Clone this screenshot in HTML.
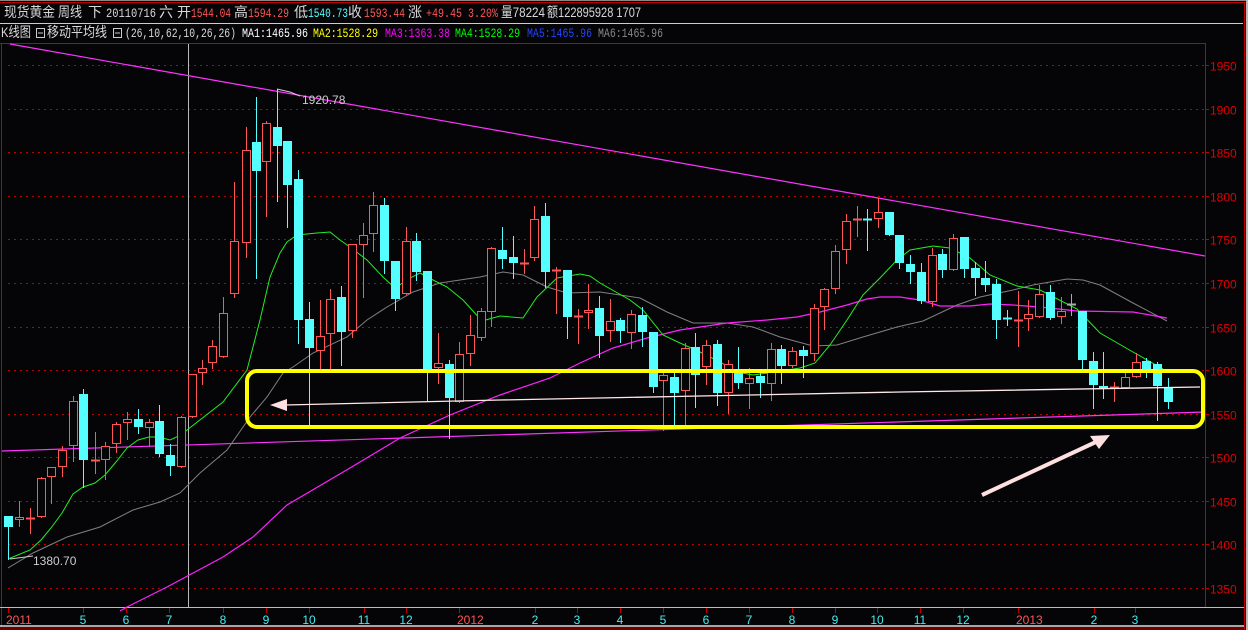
<!DOCTYPE html>
<html><head><meta charset="utf-8">
<style>
html,body{margin:0;padding:0;background:#050508;width:1248px;height:630px;overflow:hidden}
svg{display:block}
.t{font-family:"Liberation Sans","Noto Sans CJK SC",sans-serif;font-size:14px}
.m{font-family:"Liberation Mono","Noto Sans CJK SC",monospace;font-size:13px}
.ax{font-family:"Liberation Sans",sans-serif;font-size:12px}
</style></head>
<body>
<svg id="s" width="1248" height="630" xmlns="http://www.w3.org/2000/svg">
<rect width="1248" height="630" fill="#050508"/>
<line x1="0" y1="0.5" x2="1248" y2="0.5" stroke="#888"/>
<line x1="0" y1="2.5" x2="1246" y2="2.5" stroke="#c00000"/>
<line x1="1244.5" y1="2" x2="1244.5" y2="630" stroke="#c00000"/>
<rect x="1246" y="0" width="2" height="630" fill="#bbb"/>
<line x1="0" y1="23.5" x2="1243" y2="23.5" stroke="#ccc"/>
<line x1="0" y1="43.5" x2="1206" y2="43.5" stroke="#c00000"/>
<line x1="1.5" y1="43" x2="1.5" y2="630" stroke="#c00000"/>
<line x1="1205.5" y1="43" x2="1205.5" y2="607" stroke="#c00000"/>
<line x1="0" y1="607.5" x2="1244" y2="607.5" stroke="#bbb"/>
<line x1="0" y1="626" x2="1244" y2="626" stroke="#ddd" stroke-width="1.5"/>
<rect x="0" y="627" width="1244" height="3" fill="#700000"/>

<g class="t" fill="#d8d8d8">
<text x="4" y="17" textLength="51" lengthAdjust="spacingAndGlyphs">现货黄金</text>
<text x="58" y="17" textLength="24" lengthAdjust="spacingAndGlyphs">周线</text>
<text x="88" y="17">下</text>
<text x="106" y="17" class="m" textLength="50" lengthAdjust="spacingAndGlyphs">20110716</text>
<text x="159" y="17">六</text>
<text x="177" y="17">开</text>
<text x="191" y="17" class="m" fill="#ff5555" textLength="40" lengthAdjust="spacingAndGlyphs">1544.04</text>
<text x="234" y="17">高</text>
<text x="248" y="17" class="m" fill="#ff5555" textLength="41" lengthAdjust="spacingAndGlyphs">1594.29</text>
<text x="294" y="17">低</text>
<text x="308" y="17" class="m" fill="#55ffff" textLength="40" lengthAdjust="spacingAndGlyphs">1540.73</text>
<text x="348" y="17">收</text>
<text x="364" y="17" class="m" fill="#ff5555" textLength="41" lengthAdjust="spacingAndGlyphs">1593.44</text>
<text x="408" y="17">涨</text>
<text x="426" y="17" class="m" fill="#ff5555" textLength="72" lengthAdjust="spacingAndGlyphs">+49.45 3.20%</text>
<text x="501" y="17" textLength="44" lengthAdjust="spacingAndGlyphs">量78224</text>
<text x="547" y="17" textLength="94" lengthAdjust="spacingAndGlyphs">额122895928 1707</text>
</g>
<g class="t" fill="#d8d8d8">
<text x="1" y="37" textLength="30" lengthAdjust="spacingAndGlyphs">K线图</text>
<rect x="36.5" y="28.5" width="8" height="9" fill="none" stroke="#ccc"/><line x1="38" y1="33" x2="43" y2="33" stroke="#ccc"/>
<text x="47" y="37" textLength="60" lengthAdjust="spacingAndGlyphs">移动平均线</text>
<rect x="113.5" y="28.5" width="8" height="9" fill="none" stroke="#ccc"/><line x1="115" y1="33" x2="120" y2="33" stroke="#ccc"/>
<text x="125" y="37" class="m" textLength="111" lengthAdjust="spacingAndGlyphs">(26,10,62,10,26,26)</text>
<text x="242" y="37" class="m" fill="#ffffff" textLength="66" lengthAdjust="spacingAndGlyphs">MA1:1465.96</text>
<text x="313" y="37" class="m" fill="#ffff00" textLength="65" lengthAdjust="spacingAndGlyphs">MA2:1528.29</text>
<text x="385" y="37" class="m" fill="#ff00ff" textLength="65" lengthAdjust="spacingAndGlyphs">MA3:1363.38</text>
<text x="455" y="37" class="m" fill="#00ff00" textLength="65" lengthAdjust="spacingAndGlyphs">MA4:1528.29</text>
<text x="527" y="37" class="m" fill="#2244ff" textLength="65" lengthAdjust="spacingAndGlyphs">MA5:1465.96</text>
<text x="598" y="37" class="m" fill="#888888" textLength="65" lengthAdjust="spacingAndGlyphs">MA6:1465.96</text>
</g>

<g id="grid"></g>
<line x1="188.5" y1="44" x2="188.5" y2="607" stroke="#bbb"/>

<line x1="10" y1="44" x2="1205" y2="256" stroke="#ff33ff" stroke-width="1.2"/>
<line x1="2" y1="451" x2="1205" y2="412" stroke="#ff33ff" stroke-width="1.2"/>

<polyline fill="none" stroke="#808080" stroke-width="1" points="8,568 33,553 67,537 100,527 133,510 160,502 180,493 200,473 227,450 250,417 267,397 283,373 293,367 313,353 347,337 367,320 387,307 413,292 440,283 480,277 503,272 523,275 547,287 567,293 600,292 640,298 667,312 693,323 727,323 753,327 780,337 813,346 837,345 863,337 897,327 923,321 957,305 980,297 1013,290 1033,285 1067,279 1083,280 1100,285 1133,303 1167,321"/>
<polyline fill="none" stroke="#ff22ff" stroke-width="1.2" points="120,611 127,607 167,587 223,557 253,537 287,505 350,468 400,438 450,415 500,395 550,378 580,363 613,348 647,338 680,330 727,323 767,320 797,317 820,312 847,305 867,299 880,297 900,297 920,300 940,306 970,306 990,304 1013,305 1040,307 1077,311 1133,312 1167,318"/>
<polyline fill="none" stroke="#22ee22" stroke-width="1" points="8,559 30,550 41,540 51,528 62,513 73,494 83,487 95,483 105,475 116,462 127,448 138,440 149,437 159,437 170,440 181,435 187,430 223,402 247,370 260,320 270,277 280,253 287,242 297,235 317,233 330,232 340,240 350,247 367,260 383,277 395,288 410,278 420,273 433,280 447,287 463,300 482,321 500,316 523,318 537,297 557,278 580,274 590,276 600,283 630,300 643,310 663,335 680,343 700,352 720,362 737,372 753,375 768,373 800,368 815,363 830,345 847,320 863,295 880,278 897,260 910,250 933,246 950,248 970,258 990,275 1017,286 1040,290 1077,309 1100,333 1133,352 1163,369"/>

<g id="candles"></g>

<polyline fill="none" stroke="#ffe8e8" stroke-width="1.3" points="285,405 500,400 700,396 900,392 1200,387"/>
<polygon points="270,405 287,399 287,411" fill="#ffe0e0"/>
<rect x="247" y="371" width="956" height="56" rx="10" ry="10" fill="none" stroke="#ffff00" stroke-width="4"/>
<line x1="982" y1="495" x2="1098" y2="441" stroke="#ffe0e0" stroke-width="4"/>
<polygon points="1110,435 1090,436 1099,449" fill="#ffe0e0"/>

<polyline points="277,89 290,92 300,96" fill="none" stroke="#ccc"/>
<text x="302" y="104" class="ax" fill="#ccc">1920.78</text>
<polyline points="10,559 33,556" fill="none" stroke="#ccc"/>
<text x="33" y="565" class="ax" fill="#ccc">1380.70</text>

<g id="yax" class="ax" fill="#e00000"></g>
<g id="xax" class="ax"></g>
</svg>
<script>
var NS="http://www.w3.org/2000/svg";
function el(t,a,p){var e=document.createElementNS(NS,t);for(var k in a)e.setAttribute(k,a[k]);(p||document.getElementById('s')).appendChild(e);return e;}
var grid=document.getElementById('grid'),yax=document.getElementById('yax');
for(var p=1950;p>=1350;p-=50){var y=Math.round(65+(1950-p)*0.8717)+0.5;
el('line',{x1:8,y1:y,x2:1205,y2:y,stroke:'#c00000','stroke-dasharray':'2,4'},grid);
el('line',{x1:1205,y1:y,x2:1209,y2:y,stroke:'#c00000'},grid);
var t=el('text',{x:1210,y:y+5},yax);t.textContent=p;}
var xl=[[8,'2011',1],[83,'5'],[126,'6'],[169,'7'],[223,'8'],[266,'9'],[309,'10'],[364,'11'],[406,'12'],[459,'2012',1],[535,'2'],[577,'3'],[620,'4'],[663,'5'],[706,'6'],[749,'7'],[792,'8'],[835,'9'],[877,'10'],[920,'11'],[963,'12'],[1018,'2013',1],[1094,'2'],[1135,'3']];
var xax=document.getElementById('xax');
xl.forEach(function(a){el('line',{x1:a[0]+0.5,y1:608,x2:a[0]+0.5,y2:613,stroke:'#c00000'},xax);
var t=el('text',{x:a[1].length>=4?a[0]-2:a[0],y:624,fill:a[2]?'#ff5555':'#44eeee','text-anchor':a[1].length>=4?'start':'middle'},xax);t.textContent=a[1];});
var C=[[8,516,527,516,559,'c'],[19,517,520,501,526,'r'],[30,518,518,508,533,'r'],[41,478,517,477,517,'r'],[51,467,477,467,503,'r'],[62,450,467,446,476,'r'],[73,401,446,396,461,'r'],[83,394,460,389,487,'c'],[95,460,460,432,473,'r'],[105,446,460,442,479,'r'],[116,424,444,422,452,'r'],[127,419,423,412,439,'r'],[138,419,427,409,433,'c'],[149,422,428,419,446,'r'],[159,421,454,405,456,'c'],[170,455,466,444,475,'c'],[181,417,467,416,467,'r'],[192,374,417,374,417,'r'],[202,368,373,360,384,'r'],[212,346,363,340,368,'r'],[223,313,357,297,357,'r'],[234,241,294,182,297,'r'],[246,150,243,127,257,'r'],[256,142,171,97,278,'c'],[266,123,162,121,216,'r'],[277,127,146,89,201,'c'],[287,141,185,141,227,'c'],[298,179,320,170,343,'c'],[309,319,348,302,425,'c'],[320,336,351,300,370,'r'],[330,299,334,289,370,'r'],[341,297,332,286,365,'c'],[352,244,331,244,337,'r'],[363,235,245,223,297,'r'],[373,205,234,192,251,'r'],[384,205,261,198,273,'c'],[395,261,299,261,310,'c'],[406,241,294,227,294,'r'],[416,241,272,233,280,'c'],[427,271,370,271,400,'c'],[438,363,368,333,383,'r'],[449,364,398,360,438,'c'],[459,354,402,342,402,'r'],[470,335,354,315,365,'r'],[481,311,338,308,340,'r'],[491,248,312,247,326,'r'],[502,250,259,227,268,'c'],[513,257,263,236,278,'c'],[524,263,263,249,273,'r'],[534,219,258,206,260,'r'],[545,216,272,203,287,'c'],[556,270,270,267,313,'r'],[567,270,317,270,338,'c'],[578,316,316,309,343,'r'],[588,310,313,284,328,'r'],[599,308,336,296,357,'c'],[610,321,331,299,341,'r'],[620,320,331,318,342,'c'],[631,314,333,310,348,'r'],[642,315,332,307,346,'c'],[653,332,387,332,392,'c'],[663,375,381,369,430,'r'],[674,377,393,373,425,'c'],[685,348,391,343,428,'r'],[695,347,375,333,407,'c'],[706,345,367,340,384,'r'],[717,344,393,340,405,'c'],[728,364,393,360,413,'r'],[738,373,383,347,388,'c'],[749,378,384,368,408,'r'],[760,376,383,373,397,'c'],[771,349,384,343,400,'r'],[781,349,366,345,383,'c'],[792,351,366,347,367,'r'],[803,350,356,346,377,'c'],[814,308,354,304,360,'r'],[824,289,307,288,329,'r'],[835,251,289,245,293,'r'],[846,221,250,214,263,'r'],[857,219,219,206,236,'r'],[867,219,219,209,250,'c'],[878,212,219,198,227,'r'],[889,212,235,212,235,'c'],[899,235,263,235,268,'c'],[910,264,272,255,283,'c'],[921,272,301,263,303,'c'],[932,255,302,248,306,'r'],[942,254,270,249,277,'c'],[953,238,270,234,270,'r'],[964,237,269,237,277,'c'],[975,268,278,262,295,'c'],[985,278,285,261,291,'c'],[996,284,320,279,338,'c'],[1007,318,318,310,325,'c'],[1018,320,320,291,346,'r'],[1028,314,319,300,330,'r'],[1039,294,317,285,317,'r'],[1050,292,318,285,319,'c'],[1061,311,317,297,323,'r'],[1071,304,304,294,315,'g'],[1082,311,360,311,369,'c'],[1093,361,385,352,408,'c'],[1103,386,389,352,398,'c'],[1114,387,387,382,401,'r'],[1125,377,388,371,388,'r'],[1136,362,377,353,377,'r'],[1146,361,373,358,377,'c'],[1157,364,386,362,420,'c'],[1168,388,402,378,408,'c']];
var cg=document.getElementById('candles');
C.forEach(function(c){var x=c[0],col=c[5]=='c'?'#55ffff':(c[5]=='g'?'#aaaaaa':'#ff5555');
el('line',{x1:x+0.5,y1:c[3],x2:x+0.5,y2:c[4]+1,stroke:col},cg);
if(c[2]-c[1]<2){el('line',{x1:x-4,y1:c[1]+0.5,x2:x+5,y2:c[1]+0.5,stroke:col,'stroke-width':2},cg);}
else if(c[5]=='c'){el('rect',{x:x-4,y:c[1],width:9,height:c[2]-c[1],fill:col},cg);}
else{el('rect',{x:x-3.5,y:c[1]+0.5,width:8,height:c[2]-c[1]-1,fill:'#050508',stroke:col},cg);}
});
</script>
</body></html>
